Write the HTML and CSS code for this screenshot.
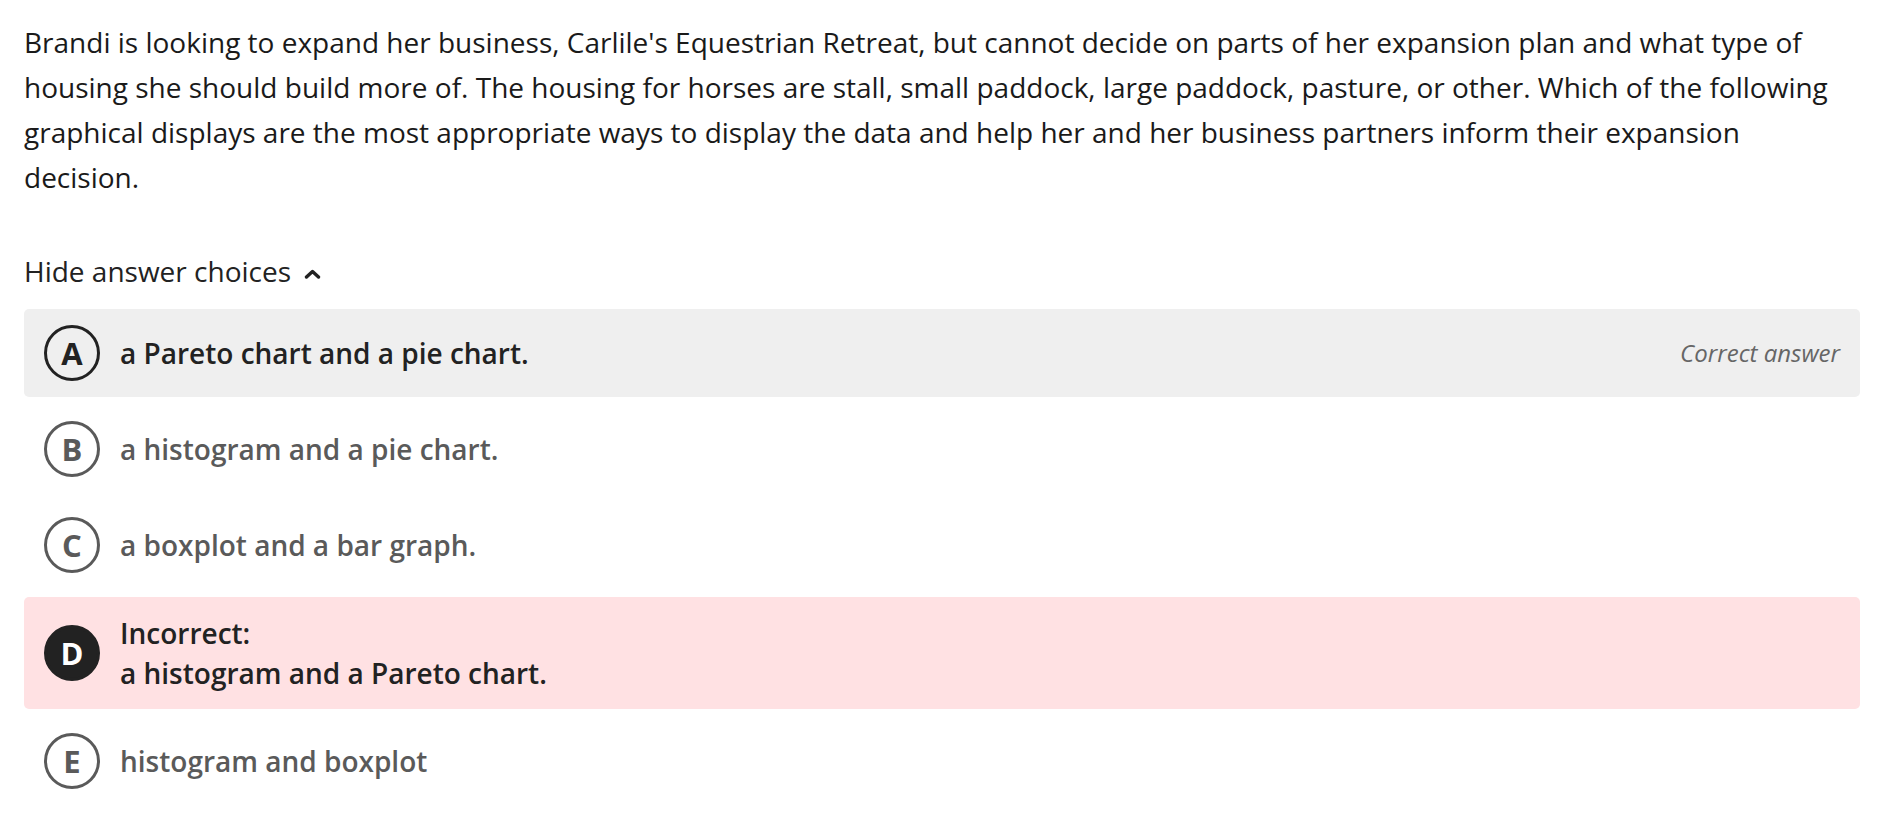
FILE: index.html
```html
<!DOCTYPE html>
<html lang="en">
<head>
<meta charset="utf-8">
<title>Question</title>
<link rel="stylesheet" href="styles.css">
</head>
<body>
<main class="question">
  <p class="prompt">Brandi is looking to expand her business, Carlile's Equestrian Retreat, but cannot decide on parts of her expansion plan and what type of housing she should build more of. The housing for horses are stall, small paddock, large paddock, pasture, or other. Which of the following graphical displays are the most appropriate ways to display the data and help her and her business partners inform their expansion decision.</p>
  <button class="toggle" type="button">Hide answer choices
    <svg class="chev" width="17" height="10" viewBox="0 0 17 10" aria-hidden="true"><path d="M2.5 8 L8.5 2.6 L14.5 8" fill="none" stroke="#222" stroke-width="3.4" stroke-linecap="round" stroke-linejoin="round"/></svg>
  </button>
  <ul class="choices">
    <li class="choice correct">
      <span class="letter">A</span>
      <span class="text">a Pareto chart and a pie chart.</span>
      <span class="note">Correct answer</span>
    </li>
    <li class="choice">
      <span class="letter">B</span>
      <span class="text">a histogram and a pie chart.</span>
    </li>
    <li class="choice">
      <span class="letter">C</span>
      <span class="text">a boxplot and a bar graph.</span>
    </li>
    <li class="choice incorrect">
      <span class="letter">D</span>
      <span class="text"><span class="label">Incorrect:</span><br>a histogram and a Pareto chart.</span>
    </li>
    <li class="choice">
      <span class="letter">E</span>
      <span class="text">histogram and boxplot</span>
    </li>
  </ul>
</main>
</body>
</html>
```
FILE: styles.css
```css
html, body {
  margin: 0;
  padding: 0;
  background: #fff;
}
body {
  font-family: "Open Sans", "Liberation Sans", sans-serif;
  color: #222;
}
.question {
  padding: 20px 44px 0 24px;
}
.prompt {
  margin: 0 0 51px;
  font-size: 28px;
  line-height: 45px;
  color: #1a1a1a;
}
.toggle {
  display: flex;
  align-items: center;
  gap: 13px;
  padding: 0;
  margin: 0 0 18px;
  border: 0;
  background: none;
  font-family: inherit;
  font-size: 28px;
  line-height: 40px;
  color: #222;
  cursor: pointer;
}
.chev {
  margin-top: 6px;
}
.choices {
  list-style: none;
  margin: 0;
  padding: 0;
  display: flex;
  flex-direction: column;
  gap: 8px;
}
.choice {
  display: flex;
  align-items: center;
  gap: 20px;
  padding: 16px 20px;
  min-height: 56px;
  border-radius: 5px;
  color: #5a5a5a;
  font-size: 28px;
  font-weight: 600;
  line-height: 40px;
}
.letter {
  flex: none;
  box-sizing: border-box;
  width: 56px;
  height: 56px;
  border: 3px solid #5a5a5a;
  border-radius: 50%;
  display: flex;
  align-items: center;
  justify-content: center;
  font-size: 31px;
  font-weight: 700;
  line-height: 1;
}
.text {
  flex: 1;
}
.correct {
  background: #efefef;
  color: #222;
}
.correct .letter {
  border-color: #222;
}
.note {
  font-size: 24px;
  font-style: italic;
  font-weight: 400;
  color: #666;
}
.incorrect {
  background: #ffe1e3;
  color: #222;
}
.incorrect .letter {
  background: #222;
  border-color: #222;
  color: #fff;
}
.label {
  font-weight: 600;
}
```
